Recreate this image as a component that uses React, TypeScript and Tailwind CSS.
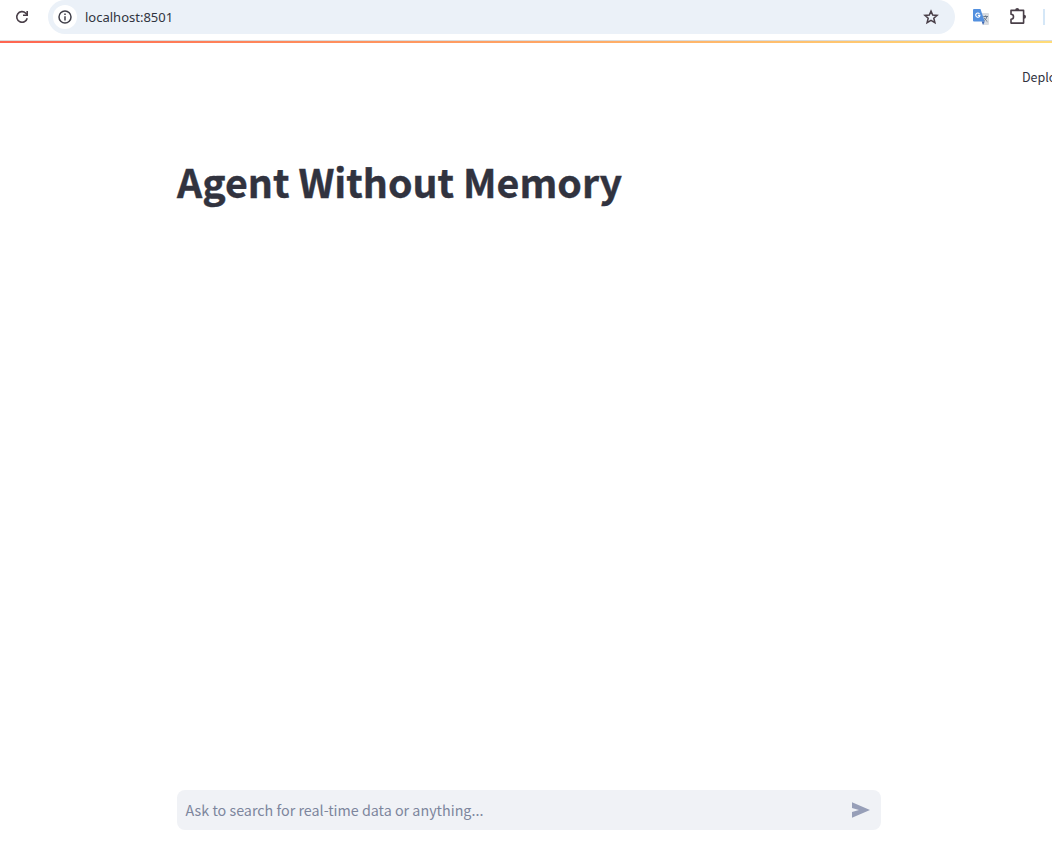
export default function App() {
  return (
    <div className="flex h-[843px] w-[1052px] flex-col overflow-hidden bg-white font-['Noto_Sans_CJK_SC',sans-serif]">
      <header className="flex h-[40px] shrink-0 items-start">
        <svg className="mt-[9px] ml-[14px] size-4 shrink-0" viewBox="0 0 16 16" fill="none" stroke="#493f48" strokeWidth="1.6">
          <path d="M13.2 9.2A5.3 5.3 0 1 1 11.8 4.2L13 5.6" />
          <path d="M13.2 2V6.2H9" />
        </svg>
        <div className="ml-[18px] flex h-[34px] w-[907px] shrink-0 items-center rounded-full bg-[#ebf1f8] pl-[5px]">
          <span className="flex size-6 items-center justify-center rounded-full bg-white">
            <svg className="size-[14px]" viewBox="0 0 14 14" fill="none" stroke="#41404a" strokeWidth="1.5">
              <circle cx="7" cy="7" r="6" />
              <path d="M7 6.2V10.4M7 3.5V5" />
            </svg>
          </span>
          <span className="ml-2 font-['Noto_Sans'] text-[13px] leading-5 text-[#303440]">localhost:8501</span>
          <svg className="mr-4 ml-auto size-4" viewBox="0 0 16 16" fill="none" stroke="#493f48" strokeWidth="1.5">
            <path d="M8 2.1L9.7 6L14.1 6.4L10.8 9.3L11.9 13.7L8 11.3L4.1 13.7L5.2 9.3L1.9 6.4L6.3 6Z" />
          </svg>
        </div>
        <svg className="mt-[9px] ml-[18px] size-4 shrink-0" viewBox="0 0 16 16">
          <path d="M6 4H15Q16 4 16 5V15Q16 16 15 16H10Z" fill="#d9dce0" />
          <path d="M1 0H7.5L11.7 12.5H1Q0 12.5 0 11.5V1Q0 0 1 0Z" fill="#5390df" />
          <path d="M8.7 12.5H11.7L10 16Z" fill="#3c68b5" />
          <path d="M6.5 4.9A2.1 2.1 0 1 0 6.9 6.4H4.9" fill="none" stroke="#fff" strokeWidth="1.1" />
          <path d="M10.3 7.5H15M12.6 6.5V7.5M14 7.5Q13.3 10.2 11.3 11.6M11.2 8.8Q12.3 11 14.4 12.7" fill="none" stroke="#69798c" strokeWidth="1" />
        </svg>
        <svg className="mt-[8px] ml-[20px] size-[18px] shrink-0" viewBox="0 0 18 18">
          <path d="M2 2.4H14.6V15.1H2V11.3A2.5 2.5 0 0 0 2 6.3Z" fill="none" stroke="#493f48" strokeWidth="1.6" strokeLinejoin="round" />
          <path d="M6.2 2A2 2 0 0 1 10.2 2ZM15 6.7A2 2 0 0 1 15 10.7Z" fill="#493f48" />
        </svg>
        <span className="mt-[9px] ml-4 h-4 w-[2px] bg-[#d5e7f7]" />
      </header>
      <div className="h-px shrink-0 bg-[#dadcdd]" />
      <div className="h-[2px] shrink-0 bg-linear-to-r from-[#ff6551] to-[#ffdc78]" />
      <div className="flex h-[60px] shrink-0 justify-end overflow-hidden pt-[24px]">
        <span className="w-[30px] overflow-hidden text-[12.5px] leading-5 text-[#31333f]">Deploy</span>
      </div>
      <main className="flex flex-1 flex-col pr-[171px] pb-[13px] pl-[177px]">
        <h1 className="mt-[51px] text-[39.3px] leading-[53px] font-bold whitespace-nowrap text-[#31333f] [-webkit-text-stroke:0.4px_#31333f]">
          <span>Agent Without Memory</span>
        </h1>
        <div className="mt-auto flex h-10 items-center rounded-lg bg-[#f0f2f6] pr-3 pl-[8.5px]">
          <span className="text-[14.32px] leading-6 text-[#7d869d]">Ask to search for real-time data or anything...</span>
          <svg className="mr-[-1px] ml-auto h-4 w-[18px]" viewBox="0 0 18 16" fill="#979fb8">
            <path d="M0 0.3L18 8L0 15.7V10L7 8L0 6Z" />
          </svg>
        </div>
      </main>
    </div>
  );
}
